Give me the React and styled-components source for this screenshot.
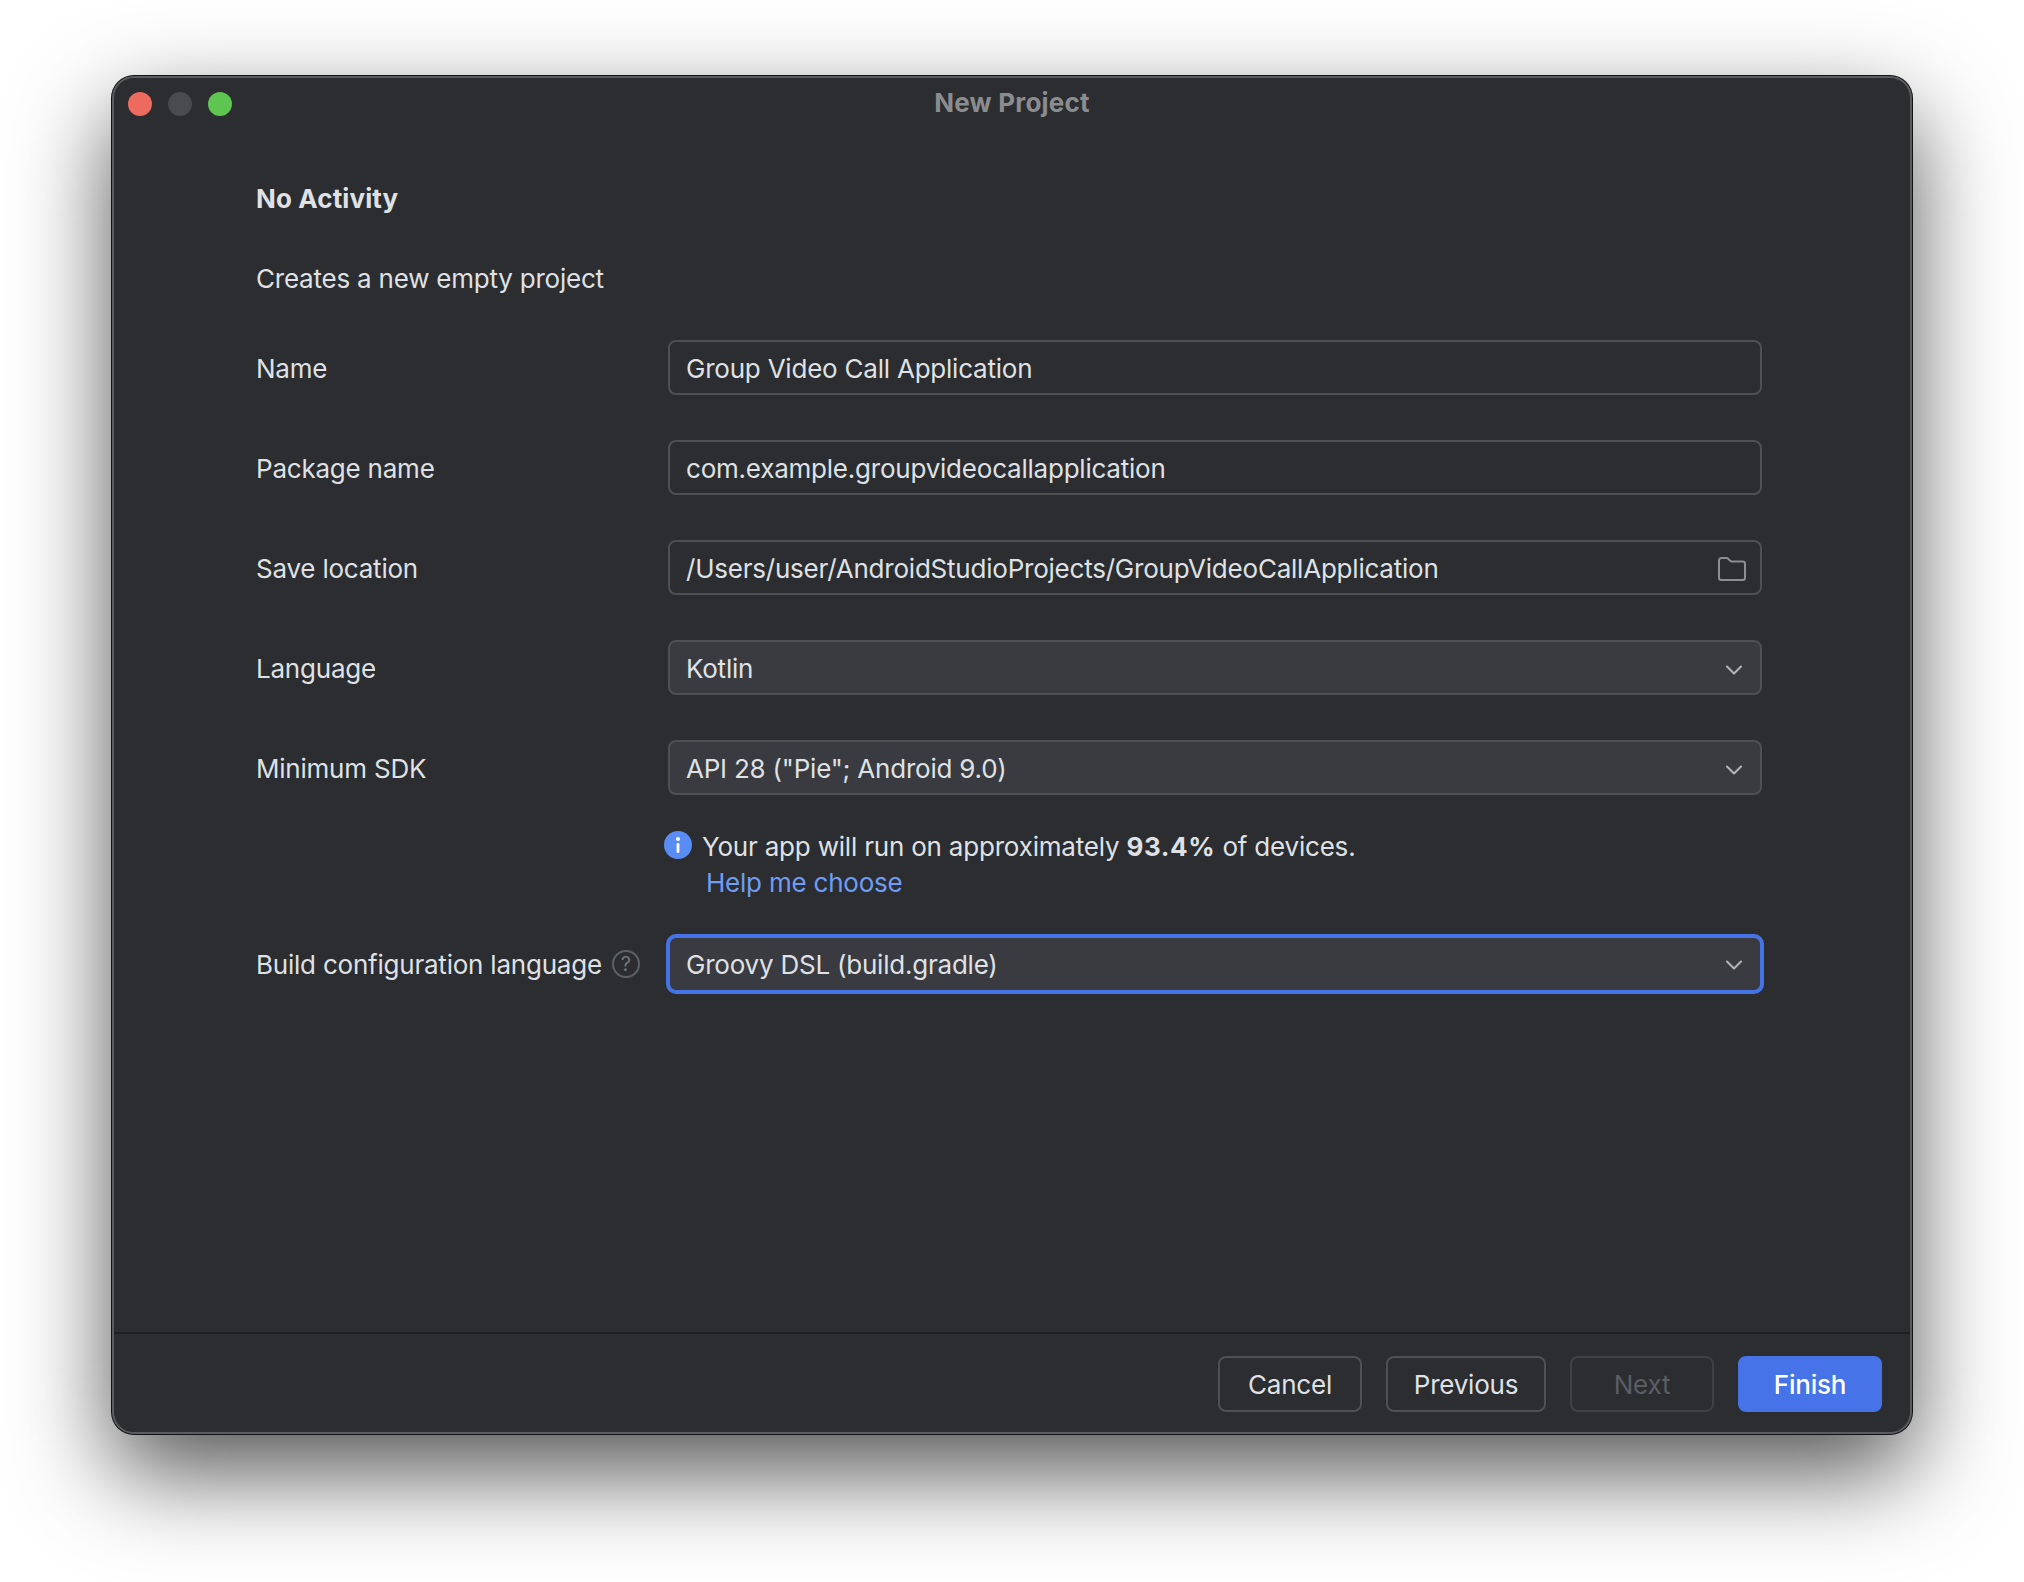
import React from "react";
import styled, { createGlobalStyle } from "styled-components";

const Global = createGlobalStyle`
  html, body { margin: 0; background: #fff; }
  body { font-family: Inter, "Noto Sans", "Liberation Sans", sans-serif; }
`;

const Page = styled.div`
  width: 2024px;
  height: 1582px;
  box-sizing: border-box;
  padding: 76px 112px 0 112px;
  overflow: hidden;
`;

const Win = styled.div`
  box-sizing: border-box;
  width: 1800px;
  height: 1358px;
  display: flex;
  flex-direction: column;
  background: #2b2d30;
  border: 2px solid #5b5c5f;
  border-radius: 22px;
  box-shadow: 0 0 0 1px #111214, 0 38px 96px rgba(0, 0, 0, 0.68);
  color: #dfe1e5;
  font-size: 26px;
  letter-spacing: -0.22px;
`;

const TitleBar = styled.div`
  position: relative;
  flex: none;
  box-sizing: border-box;
  height: 54px;
  padding-bottom: 4px;
  display: flex;
  align-items: center;
  justify-content: center;
`;

const Lights = styled.div`
  position: absolute;
  left: 14px;
  top: 14px;
  display: flex;
  gap: 16px;
`;

const Light = styled.span`
  width: 24px;
  height: 24px;
  border-radius: 50%;
  background: ${(p) => p.$color};
`;

const Title = styled.div`
  font-size: 26px;
  font-weight: 700;
  letter-spacing: 0.2px;
  color: #8b8c8f;
  line-height: 50px;
`;

const Content = styled.div`
  flex: 1;
  padding: 49px 148px 0 142px;
`;

const Heading = styled.div`
  font-size: 26px;
  font-weight: 700;
  letter-spacing: 0.12px;
  line-height: 36px;
  color: #dfe1e5;
`;

const Description = styled.div`
  margin-top: 44px;
  line-height: 36px;
`;

const Form = styled.div`
  margin-top: 43px;
  display: flex;
  flex-direction: column;
  gap: 45px;
`;

const Row = styled.div`
  display: grid;
  grid-template-columns: 412px 1094px;
  align-items: center;
  margin-top: ${(p) => p.$top || 0}px;
`;

const Label = styled.div`
  display: flex;
  align-items: center;
  gap: 10px;
  padding-top: 2px;
`;

const HelpLabel = styled(Label)`
  padding-top: 0;
`;

const Field = styled.div`
  box-sizing: border-box;
  height: ${(p) => (p.$focused ? 56 : 55)}px;
  display: flex;
  align-items: center;
  justify-content: space-between;
  padding: ${(p) => (p.$focused ? 0 : 2)}px 16px 0;
  border: 2px solid ${(p) => (p.$focused ? "#4673e8" : "#4e5054")};
  border-radius: 8px;
  background: ${(p) => (p.$select ? "#393b40" : "#2b2d30")};
  box-shadow: ${(p) => (p.$focused ? "0 0 0 2px #4673e8" : "none")};
`;

const Glyph = styled.svg`
  flex: none;
  display: block;
  fill: none;
  stroke-linecap: round;
  stroke-linejoin: round;
`;

const ChevronGlyph = styled(Glyph)`
  margin: 2px 2px 0 0;
`;

const FolderGlyph = styled(Glyph)`
  margin-right: -2px;
`;

const Info = styled.div`
  margin: -13px 0 0 412px;
  display: grid;
  grid-template-columns: 34px auto;
  line-height: 37px;
  height: 74px;
`;

const InfoIcon = styled.svg`
  display: block;
  margin: 4px 0 0 -4px;
`;

const InfoText = styled.div`
  letter-spacing: -0.2px;
  padding-top: 1px;
  height: 36px;
`;

const Percent = styled.b`
  letter-spacing: 0.6px;
`;

const Link = styled.div`
  grid-column: 2;
  color: #6f9cf6;
  padding-left: 4px;
`;

const Help = styled.span`
  box-sizing: border-box;
  width: 28px;
  height: 28px;
  display: flex;
  align-items: center;
  justify-content: center;
  border: 2px solid #5f6063;
  border-radius: 50%;
  color: #75767a;
  font-size: 20px;
  line-height: 1;
`;

const Footer = styled.div`
  flex: none;
  height: 100px;
  box-sizing: border-box;
  border-top: 2px solid #1e1f22;
  display: flex;
  justify-content: flex-end;
  align-items: flex-start;
  gap: 24px;
  padding: 22px 28px 0 0;
`;

const Button = styled.div`
  box-sizing: border-box;
  height: 56px;
  width: ${(p) => p.$w}px;
  display: flex;
  align-items: center;
  justify-content: center;
  border-radius: 8px;
  border: 2px solid ${(p) => (p.$primary ? "#4673e8" : p.$disabled ? "#3e4044" : "#4e5054")};
  background: ${(p) => (p.$primary ? "#4673e8" : "transparent")};
  color: ${(p) => (p.$primary ? "#fff" : p.$disabled ? "#5a5d62" : "#dfe1e5")};
  font-weight: ${(p) => (p.$primary ? 500 : 400)};
`;

const Chevron = () => (
  <ChevronGlyph width="16" height="10" viewBox="0 0 16 10" stroke="#b4b5b8" strokeWidth="2">
    <path d="M1 1.5 8 8.5 15 1.5" />
  </ChevronGlyph>
);

const Folder = () => (
  <FolderGlyph width="28" height="24" viewBox="0 0 28 24" stroke="#8d8e91" strokeWidth="2">
    <path d="M1 3.5A2.5 2.5 0 0 1 3.5 1H8.6c.8 0 1.3.3 1.9 1L12 3.6c.5.6 1 .9 1.8.9h11A2.2 2.2 0 0 1 27 6.7v14.1A2.2 2.2 0 0 1 24.8 23H3.2A2.2 2.2 0 0 1 1 20.8Z" />
  </FolderGlyph>
);

export default function App() {
  return (
    <Page>
      <Global />
      <Win>
        <TitleBar>
          <Lights>
            <Light $color="#ec6a5e" />
            <Light $color="#4a4b4f" />
            <Light $color="#5ec551" />
          </Lights>
          <Title>New Project</Title>
        </TitleBar>
        <Content>
          <Heading>No Activity</Heading>
          <Description>Creates a new empty project</Description>
          <Form>
            <Row>
              <Label>Name</Label>
              <Field>Group Video Call Application</Field>
            </Row>
            <Row>
              <Label>Package name</Label>
              <Field>com.example.groupvideocallapplication</Field>
            </Row>
            <Row>
              <Label>Save location</Label>
              <Field>
                /Users/user/AndroidStudioProjects/GroupVideoCallApplication
                <Folder />
              </Field>
            </Row>
            <Row>
              <Label>Language</Label>
              <Field $select>
                Kotlin
                <Chevron />
              </Field>
            </Row>
            <Row>
              <Label>Minimum SDK</Label>
              <Field $select>
                API 28 ("Pie"; Android 9.0)
                <Chevron />
              </Field>
            </Row>
            <Info>
              <InfoIcon width="28" height="28" viewBox="0 0 28 28">
                <circle cx="14" cy="14" r="14" fill="#5a8cf6" />
                <circle cx="14" cy="8" r="2" fill="#fff" />
                <rect x="12.6" y="12" width="2.8" height="10" rx="1.2" fill="#fff" />
              </InfoIcon>
              <InfoText>
                Your app will run on approximately <Percent>93.4%</Percent> of devices.
              </InfoText>
              <Link>Help me choose</Link>
            </Info>
            <Row $top={-10}>
              <HelpLabel>
                Build configuration language
                <Help>?</Help>
              </HelpLabel>
              <Field $select $focused>
                Groovy DSL (build.gradle)
                <Chevron />
              </Field>
            </Row>
          </Form>
        </Content>
        <Footer>
          <Button $w={144}>Cancel</Button>
          <Button $w={160}>Previous</Button>
          <Button $w={144} $disabled>Next</Button>
          <Button $w={144} $primary>Finish</Button>
        </Footer>
      </Win>
    </Page>
  );
}
